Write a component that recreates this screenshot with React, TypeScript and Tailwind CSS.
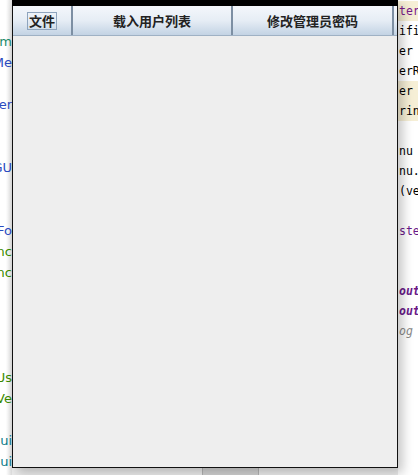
const leftLines: { t: string; c: string }[] = [
  { t: 'hmm', c: 'text-[#1a8a6a]' },
  { t: 'nMe', c: 'text-[#2a4bc0]' },
  { t: '', c: '' },
  { t: 'rer', c: 'text-[#2a4bc0]' },
  { t: '', c: '' },
  { t: '', c: '' },
  { t: 'GU', c: 'text-[#2a4bc0]' },
  { t: '', c: '' },
  { t: '', c: '' },
  { t: '-Fo', c: 'text-[#2a4bc0]' },
  { t: 'anc', c: 'text-[#3a8a00]' },
  { t: 'anc', c: 'text-[#3a8a00]' },
  { t: '', c: '' },
  { t: '', c: '' },
  { t: '', c: '' },
  { t: '', c: '' },
  { t: '-Us', c: 'text-[#3a8a00]' },
  { t: 'Ve', c: 'text-[#3a8a00]' },
  { t: '', c: '' },
  { t: 'Gui', c: 'text-[#0b7a8a]' },
  { t: 'Gui', c: 'text-[#0b7a8a]' },
];

const rightLines: { t: string; c: string; hl?: boolean }[] = [
  { t: 'ter', c: 'text-[#7a1a8a]', hl: true },
  { t: 'ifi', c: 'text-black' },
  { t: 'er', c: 'text-black' },
  { t: 'erR', c: 'text-black' },
  { t: 'er', c: 'text-black', hl: true },
  { t: 'rin', c: 'text-black', hl: true },
  { t: '', c: '' },
  { t: 'nu', c: 'text-black' },
  { t: 'nu.', c: 'text-black' },
  { t: '(ve', c: 'text-black' },
  { t: '', c: '' },
  { t: 'ste', c: 'text-[#6a1a8a]' },
  { t: '', c: '' },
  { t: '', c: '' },
  { t: 'out', c: 'text-[#6a1a8a] italic font-bold' },
  { t: 'out', c: 'text-[#6a1a8a] italic font-bold' },
  { t: 'og', c: 'text-[#8a8a8a] italic' },
];

const MenuItem = ({ label, w, focus }: { label: string; w: string; focus?: boolean }) => (
  <div className={`${w} h-full flex items-center justify-center border-r-2 border-[#7d8fa3]`}>
    <span
      className={
        focus
          ? 'px-[1px] leading-[16px] border border-[#8ea4bd] text-[13px] font-bold text-[#222]'
          : 'text-[13px] font-bold text-[#222]'
      }
    >
      {label}
    </span>
  </div>
);

export default function App() {
  return (
    <div
      className="w-[418px] h-[475px] overflow-hidden bg-white flex"
      style={{ fontFamily: '"Noto Sans CJK SC", "Noto Sans", sans-serif' }}
    >
      {/* IDE left edge */}
      <div className="w-[12px] shrink-0 h-full overflow-hidden bg-gradient-to-r from-white via-white to-[#dcdcdc] pt-[31px] font-['DejaVu_Sans'] text-[13px]">
        {leftLines.map((l, i) => (
          <div key={i} className={`h-[21px] leading-[21px] whitespace-nowrap flex justify-end ${l.c}`}>
            {l.t}
          </div>
        ))}
      </div>

      {/* Swing window + bottom bar */}
      <div className="w-[386px] shrink-0 flex flex-col">
        <div className="h-[468px] flex flex-col border-x border-b border-[#111] bg-[#eeeeee] relative z-10 shadow-[5px_5px_10px_rgba(0,0,0,0.22)]">
          <div className="h-[6px] bg-black -mx-px" />
          <div className="h-[30px] flex bg-gradient-to-b from-[#f4f7fb] via-[#e6edf5] to-[#c3d3e4] border-b border-[#9fb1c4]">
            <MenuItem label="文件" w="w-[60px]" focus />
            <MenuItem label="载入用户列表" w="w-[160px]" />
            <MenuItem label="修改管理员密码" w="w-[161px]" />
            <div className="flex-1" />
          </div>
          <div className="flex-1" />
        </div>
        <div className="flex-1 flex bg-[#ececec]">
          <div className="w-[190px]" />
          <div className="w-[57px] bg-[#d2d2d2] border-x border-[#b4b4b4]" />
        </div>
      </div>

      {/* IDE right edge */}
      <div className="flex-1 h-full overflow-hidden pt-[1px] font-['DejaVu_Sans_Mono'] text-[11.5px] bg-white">
        {rightLines.map((l, i) => (
          <div
            key={i}
            className={`h-[20px] leading-[20px] pl-[1px] whitespace-nowrap ${l.hl ? 'bg-[#f6efd6]' : ''} ${l.c}`}
          >
            {l.t}
          </div>
        ))}
      </div>
    </div>
  );
}
